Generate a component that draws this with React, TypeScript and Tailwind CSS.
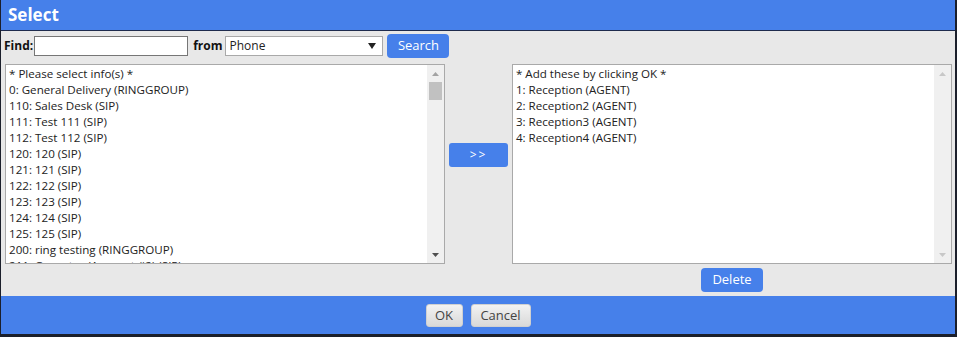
const leftItems = [
  "* Please select info(s) *",
  "0: General Delivery (RINGGROUP)",
  "110: Sales Desk (SIP)",
  "111: Test 111 (SIP)",
  "112: Test 112 (SIP)",
  "120: 120 (SIP)",
  "121: 121 (SIP)",
  "122: 122 (SIP)",
  "123: 123 (SIP)",
  "124: 124 (SIP)",
  "125: 125 (SIP)",
  "200: ring testing (RINGGROUP)",
  "211: Operator (Account #2) (SIP)",
];

const rightItems = [
  "* Add these by clicking OK *",
  "1: Reception (AGENT)",
  "2: Reception2 (AGENT)",
  "3: Reception3 (AGENT)",
  "4: Reception4 (AGENT)",
];

function Scrollbar({ disabled }: { disabled?: boolean }) {
  const arrow = disabled ? "#c8c8c8" : "#a3a3a3";
  return (
    <div className="flex w-[17px] flex-col items-center bg-[#f0f0f0]">
      <div className="flex h-[17px] w-full items-center justify-center">
        <svg width="7" height="4" viewBox="0 0 7 4">
          <path d="M0 4 L3.5 0 L7 4 Z" fill={arrow} />
        </svg>
      </div>
      {!disabled && <div className="h-[18px] w-[13px] bg-[#c1c1c1]" />}
      <div className="flex-1" />
      <div className="flex h-[17px] w-full items-center justify-center">
        <svg width="7" height="4" viewBox="0 0 7 4">
          <path d="M0 0 L3.5 4 L7 0 Z" fill={disabled ? arrow : "#505050"} />
        </svg>
      </div>
    </div>
  );
}

function ListBox({ items, disabled }: { items: string[]; disabled?: boolean }) {
  return (
    <div className="flex h-[200px] w-[441px] border border-[#a9a9a9] bg-white">
      <div className="flex-1 overflow-hidden pl-[3px] pt-[1px]">
        {items.map((item) => (
          <div key={item} className="h-[16px] whitespace-nowrap text-[11.6px] leading-[16px] text-[#222]">
            {item}
          </div>
        ))}
      </div>
      <Scrollbar disabled={disabled} />
    </div>
  );
}

export default function App() {
  return (
    <div
      className="w-[957px] overflow-hidden border-b-[3px] border-l border-r-2 border-[#1b1f2b] text-[12px]"
      style={{ fontFamily: '"Open Sans", "Noto Sans", sans-serif' }}
    >
      <div className="flex h-[31px] items-center border-b border-[#1e2b4d] bg-[#4680ea] px-[7px]">
        <span className="text-[17px] font-bold text-white">Select</span>
      </div>

      <div className="h-[265px] bg-[#e8e8e8] px-[3px] pt-[3px]">
        <div className="flex h-[24px] items-center">
          <span className="font-bold text-[#111]">Find:</span>
          <input
            type="text"
            className="ml-[1px] h-[20px] w-[154px] border border-[#767676] bg-white outline-none"
          />
          <span className="ml-[5px] font-bold text-[#111]">from</span>
          <div className="ml-[3px] flex h-[20px] w-[158px] items-center justify-between border border-[#a9a9a9] bg-white pl-[3px] pr-[6px]">
            <span className="text-[#222]">Phone</span>
            <svg width="8" height="6" viewBox="0 0 8 6">
              <path d="M0 0 L8 0 L4 6 Z" fill="#222" />
            </svg>
          </div>
          <button className="ml-[4px] h-[24px] w-[62px] rounded-[4px] bg-[#4680ea] text-[13px] text-white">
            Search
          </button>
        </div>

        <div className="mt-[6px] flex pl-[1px]">
          <ListBox items={leftItems} />
          <div className="flex w-[67px] items-start justify-center pt-[79px]">
            <button className="h-[24px] w-[59px] rounded-[3px] bg-[#4680ea] text-[12px] tracking-[2px] text-white">
              &gt;&gt;
            </button>
          </div>
          <ListBox items={rightItems} disabled />
        </div>

        <div className="mt-[4px] flex pl-[508px]">
          <div className="flex w-[441px] justify-center">
            <button className="h-[24px] w-[62px] rounded-[4px] bg-[#4680ea] text-[13px] text-white">
              Delete
            </button>
          </div>
        </div>
      </div>

      <div className="flex h-[38px] items-center justify-center gap-[8px] bg-[#4680ea] pt-[1px]">
        <button className="h-[23px] w-[37px] rounded-[3px] border border-[#d0d0d0] bg-gradient-to-b from-[#f2f2f2] to-[#d9d9d9] text-[13px] text-[#444]">
          OK
        </button>
        <button className="h-[23px] w-[60px] rounded-[3px] border border-[#d0d0d0] bg-gradient-to-b from-[#f2f2f2] to-[#d9d9d9] text-[13px] text-[#444]">
          Cancel
        </button>
      </div>
    </div>
  );
}
